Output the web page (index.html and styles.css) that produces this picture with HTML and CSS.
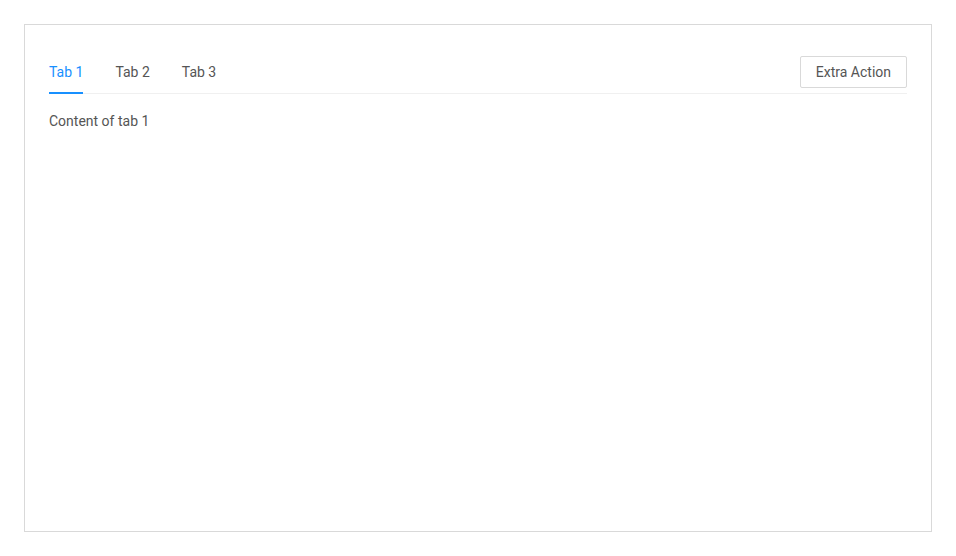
FILE: index.html
```html
<!DOCTYPE html>
<html>
<head>
<meta charset="utf-8">
<link rel="stylesheet" href="styles.css">
</head>
<body>
<div class="frame">
  <div class="tabs">
    <div class="nav">
      <div class="tab-list">
        <div class="tab active">Tab 1</div>
        <div class="tab">Tab 2</div>
        <div class="tab">Tab 3</div>
      </div>
      <button class="extra">Extra Action</button>
    </div>
    <div class="content">Content of tab 1</div>
  </div>
</div>
</body>
</html>
```
FILE: styles.css
```css
html, body {
  margin: 0;
  padding: 0;
  background: #fff;
}
body {
  padding: 24px;
  font-family: Roboto, "Liberation Sans", sans-serif;
  font-size: 14px;
  line-height: 22px;
  color: #555;
}
.frame {
  box-sizing: border-box;
  height: 508px;
  border: 1px solid #d9d9d9;
  padding: 24px;
}
.nav {
  display: flex;
  align-items: center;
  justify-content: space-between;
  box-shadow: inset 0 -1px 0 #f0f0f0;
  margin-bottom: 16px;
}
.tab-list {
  display: flex;
  gap: 32px;
}
.tab {
  padding: 12px 0 11px;
  position: relative;
  cursor: pointer;
}
.tab.active {
  color: #1890ff;
}
.tab.active::after {
  content: "";
  position: absolute;
  left: 0;
  right: 0;
  bottom: 0;
  height: 2px;
  background: #1890ff;
}
.extra {
  height: 32px;
  padding: 4px 15px;
  border: 1px solid #d9d9d9;
  border-radius: 2px;
  background: #fff;
  font-family: inherit;
  font-size: 14px;
  line-height: 22px;
  color: #555;
}
.content {
  color: #555;
}
```
